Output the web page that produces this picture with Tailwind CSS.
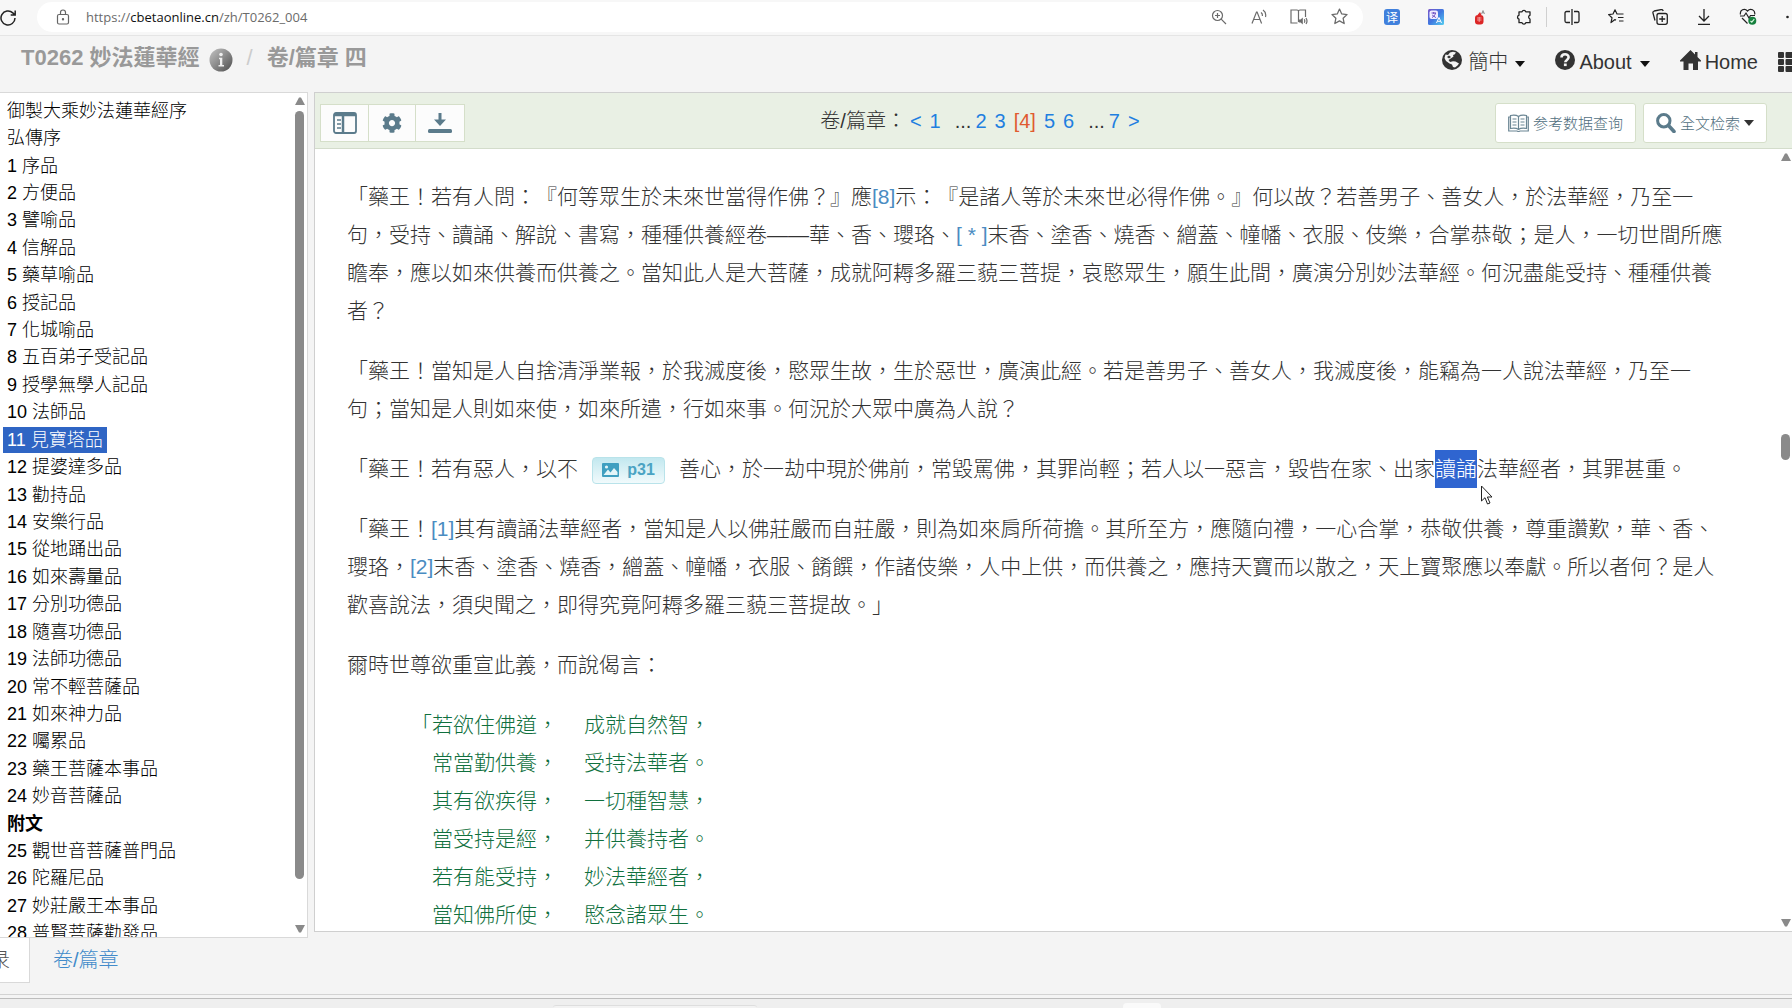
<!DOCTYPE html>
<html lang="zh-Hant">
<head>
<meta charset="utf-8">
<title>T0262 妙法蓮華經</title>
<script src="https://cdn.jsdelivr.net/npm/@tailwindcss/browser@4"></script>
</head>
<body class="flex h-screen flex-col overflow-hidden bg-[#f4f4f4] font-['Liberation_Sans','Noto_Sans_CJK_TC',sans-serif] text-[#333] [text-spacing-trim:space-all]">

<!-- Browser toolbar -->
<div class="flex h-9 shrink-0 items-center overflow-hidden border-b border-[#e5e5e5] bg-[#f7f7f7]">
  <button aria-label="重新整理" class="mr-5 -ml-px h-[18px] w-[18px] shrink-0 text-[#222]">
    <svg viewBox="0 0 18 18" class="h-full w-full" fill="none" stroke="currentColor" stroke-width="1.5"><path d="M16 9a7 7 0 1 1-2.200-5.100L16 6M16.200 1.500V6h-4.500"/></svg>
  </button>
  <div class="mb-[2px] flex h-[30px] min-w-0 flex-1 items-center rounded-full bg-white pr-1 pl-[19px]">
    <svg viewBox="0 0 14 16" class="mr-4 h-4 w-[14px] shrink-0" fill="none" stroke="#666" stroke-width="1.200"><rect x="1.500" y="5.500" width="11" height="9.500" rx="1.500"/><path d="M4.500 5.500V3.500a2.500 2.500 0 0 1 5 0v2"/><circle cx="7" cy="10.200" r=".6" fill="#666"/></svg>
    <div class="min-w-0 flex-1 font-['Open_Sans',sans-serif] text-[13px] leading-5 text-[#6b6b6b]">https://<span class="text-[#111]">cbetaonline.cn</span>/zh/T0262_004</div>
    <div class="flex items-center text-[#6b6b6b]">
      <button aria-label="縮放" class="flex w-10 justify-center"><svg viewBox="0 0 16 16" class="h-4 w-4" fill="none" stroke="currentColor" stroke-width="1.200"><circle cx="6.500" cy="6.500" r="5"/><path d="M10.200 10.200l4.800 4.800M4 6.500h5M6.500 4v5"/></svg></button>
      <button aria-label="朗讀" class="flex w-10 justify-center"><svg viewBox="0 0 16 16" class="h-4 w-4" fill="none" stroke="currentColor" stroke-width="1.200"><path d="M1 14.500L5.500 3h.6l4.500 11.500M2.600 10.500h6.400M10 3.500c1.200.8 1.600 2 1.300 3.500M12 1c2.400 1.600 3.200 4 2.500 7"/></svg></button>
      <button aria-label="沉浸式閱讀" class="flex w-10 justify-center"><svg viewBox="0 0 18 16" class="h-4 w-[18px]" fill="none" stroke="currentColor" stroke-width="1.200"><path d="M8.500 2.500V13M8.500 2.500C8.500 1.500 8 1 7 1H1v13h6.500M8.500 2.500C8.500 1.500 9 1 10 1h5.500v7"/><path d="M8.800 10.500h1.800l2.200-2v7l-2.200-2H8.800z" fill="currentColor" stroke="none"/><path d="M14.300 10.300q1 1.700 0 3.400M16 9q2 3 0 6"/></svg></button>
      <button aria-label="加入我的最愛" class="flex w-10 justify-center"><svg viewBox="0 0 16 16" class="h-[17px] w-[17px]" fill="none" stroke="currentColor" stroke-width="1.200" stroke-linejoin="round"><path d="M8 1l2.100 4.600 5 .6-3.700 3.400 1 5L8 12.100 3.600 14.600l1-5L.9 6.200l5-.6z"/></svg></button>
    </div>
  </div>
  <div class="mb-[2px] ml-[7px] flex shrink-0 items-center text-[#222]">
    <button aria-label="翻譯" class="flex w-11 justify-center"><span class="flex h-4 w-4 items-center justify-center rounded-[3px] bg-[#4080dc] font-['Noto_Sans_CJK_SC',sans-serif] text-xs leading-none text-white">译</span></button>
    <button aria-label="翻譯助手" class="flex w-11 justify-center"><svg viewBox="0 0 16 16" class="h-4 w-4"><defs><linearGradient id="tr" x1="0" y1="0" x2="1" y2="1"><stop offset="0" stop-color="#7a55c8"/><stop offset=".5" stop-color="#3f78e0"/><stop offset="1" stop-color="#58d0f0"/></linearGradient></defs><rect width="16" height="16" rx="1.500" fill="url(#tr)"/><rect x="1.500" y="1.500" width="8.500" height="8.500" rx="2" fill="#f1ecff"/><path d="M3.500 4h4.500M5.700 3v2M4 8.500c2-1 3.200-2.500 3.500-4.500M4.200 6l3.600 2.600" stroke="#6a4cc0" fill="none"/><path d="M8.500 14L11 8.500 13.500 14M9.500 12.300h3" stroke="#fff" fill="none"/></svg></button>
    <button aria-label="劃詞" class="flex w-11 justify-center"><svg viewBox="0 0 12 16" class="h-4 w-3"><rect x="1" y="6" width="8.500" height="9.500" rx="3" fill="#dc2626"/><path d="M3.500 6l2.500-3 1.500 3z" fill="#dc2626"/><path d="M3 9h4.500M5.200 8v5M3 11h4.500" stroke="#f6b5b5" stroke-width=".8"/><path d="M7.500 5L9 1.500 10.500 5M8 3.800h2" stroke="#777" fill="none" stroke-width=".7"/></svg></button>
    <button aria-label="擴充功能" class="flex w-11 justify-center"><svg viewBox="0 0 16 16" class="h-4 w-4" fill="none" stroke="currentColor" stroke-width="1.300" stroke-linejoin="round"><path d="M6 2.800a2 2 0 0 1 3.800 0H14v3.400a2 2 0 0 0 0 3.800v3.700H9.800a2 2 0 0 1-3.800 0H3V10.200a2.100 2.100 0 0 1 0-4V2.800z"/></svg></button>
    <span class="mr-[3px] h-5 w-px bg-[#d0d0d0]"></span>
    <button aria-label="分割畫面" class="flex w-11 justify-center"><svg viewBox="0 0 16 16" class="h-4 w-4" fill="none" stroke="currentColor" stroke-width="1.300"><path d="M6 2.500H2.500a1.500 1.500 0 0 0-1.500 1.500v8a1.500 1.500 0 0 0 1.500 1.500H6M10 2.500h3.500A1.500 1.500 0 0 1 15 4v8a1.500 1.500 0 0 1-1.500 1.500H10M8 0v16"/></svg></button>
    <button aria-label="我的最愛" class="flex w-11 justify-center"><svg viewBox="0 0 16 16" class="h-4 w-4" fill="none" stroke="currentColor" stroke-width="1.200" stroke-linejoin="round"><path d="M8 11.200l-1-.6-4 3 1-4.800L.6 5.600l4.400-.6L7 .8l2 4.200H15.500M10 8.500h5.500M11 12h4.500"/></svg></button>
    <button aria-label="集錦" class="flex w-11 justify-center"><svg viewBox="0 0 16 16" class="h-4 w-4" fill="none" stroke="currentColor" stroke-width="1.300"><rect x="5" y="4.500" width="10.300" height="10.800" rx="2"/><path d="M10.200 7v6M7.200 10h6M3 11.500L1 4.200a1.800 1.800 0 0 1 1.200-2.200L9 .6a1.800 1.800 0 0 1 2.200 1.400"/></svg></button>
    <button aria-label="下載" class="flex w-11 justify-center"><svg viewBox="0 0 16 16" class="h-4 w-4" fill="none" stroke="currentColor" stroke-width="1.300"><path d="M8 0v11.500M3 7l5 5 5-5M2 15.300h12"/></svg></button>
    <button aria-label="瀏覽器健康" class="flex w-11 justify-center"><svg viewBox="0 0 18 17" class="h-[17px] w-[18px]" fill="none" stroke="currentColor" stroke-width="1.200"><path d="M1.500 6.500C.5 2 5.500-.5 8.500 3c3-3.500 8-1 7.200 3.500M1 8h4l2-3 3 5 1.500-2.500H16M3 10l5.500 5.500"/><circle cx="13.300" cy="12.700" r="4" fill="#15803d" stroke="none"/><path d="M11.500 13l1.300 1.200 2.500-3" stroke="#d6f5dd"/></svg></button>
    <button aria-label="更多" class="flex w-[22px] justify-end overflow-hidden"><svg viewBox="0 0 6 4" class="h-1 w-[6px]" fill="currentColor"><circle cx="1.500" cy="2" r="1.300"/></svg></button>
  </div>
</div>

<!-- Site header -->
<header class="flex h-14 shrink-0 items-center justify-between overflow-hidden pl-[21px]">
  <div class="flex items-center pb-3 text-[22px] leading-7 font-bold text-[#999]">
    <h1>T0262 妙法蓮華經</h1>
    <a href="#info" aria-label="資訊" class="mt-1 ml-[9px] block h-6 w-6">
      <svg viewBox="0 0 24 24" class="h-6 w-6"><defs><linearGradient id="ball" x1="0" y1="0" x2="1" y2="1"><stop offset="0" stop-color="#c4c4c4"/><stop offset=".5" stop-color="#8a8a8a"/><stop offset="1" stop-color="#4c4c4c"/></linearGradient></defs><circle cx="12" cy="12" r="11.500" fill="url(#ball)"/><circle cx="12" cy="6.500" r="1.800" fill="#eee"/><path d="M10 9.800h3.300V17H15v1.500H9.500V17H11v-5.700h-1z" fill="#eee"/></svg>
    </a>
    <span class="mx-[14px] font-normal text-[#ccc]">/</span>
    <h2>卷/篇章 四</h2>
  </div>
  <nav class="flex items-center pb-1 text-xl leading-7 font-light text-[#333]">
    <a href="#lang" class="flex items-center">
      <svg viewBox="0 0 20 20" class="mb-1 mr-[6px] h-5 w-5"><circle cx="10" cy="10" r="10" fill="#333"/><path d="M8 2.500l3-.8 3 .8-1.500 2-1.500.5.5 1.500-2 1.500L8 9l-1.500 1L8 12l3-.8 2.500.3 3.500 2-1.500 2-2.500 2-2-.5-1-2.500-2.500-1L4 11 2.500 8 3.500 4.500l2.500.5z" fill="#f4f4f4"/><path d="M5 7l2-1.500L9 7 7 8.500z" fill="#333"/></svg>
      簡中
      <svg viewBox="0 0 10 6" class="mt-1 ml-[7px] h-[6px] w-[10px]" fill="#111"><path d="M0 0h10L5 6z"/></svg>
    </a>
    <a href="#about" class="ml-[30px] flex items-center">
      <svg viewBox="0 0 20 20" class="mb-1 mr-1 h-5 w-5"><circle cx="10" cy="10" r="10" fill="#333"/><path d="M6.500 7.500C6.500 3.300 13.600 3.300 13.600 7.300c0 2.500-3.300 2.700-3.300 5" fill="none" stroke="#f4f4f4" stroke-width="2.600"/><rect x="8.900" y="13.500" width="2.800" height="2.600" fill="#f4f4f4"/></svg>
      About
      <svg viewBox="0 0 10 6" class="mt-1 ml-2 h-[6px] w-[10px]" fill="#111"><path d="M0 0h10L5 6z"/></svg>
    </a>
    <a href="#home" class="ml-[30px] flex items-center">
      <svg viewBox="0 0 21 20" class="mb-1 mr-1 h-5 w-[21px]" fill="#333"><path d="M10.500 0L15 4.500V2h2.500v5L21 10.500v1h-3V20h-5v-6.500H8.500V20h-5v-8.500H0v-1z"/></svg>
      Home
    </a>
    <button aria-label="應用程式" class="ml-5 w-[14px] overflow-hidden">
      <svg viewBox="0 0 14 20" class="h-5 w-[14px]" fill="#333"><rect width="6" height="6" rx="1"/><rect x="7.500" width="8" height="6" rx="1"/><rect y="7" width="6" height="6" rx="1"/><rect x="7.500" y="7" width="8" height="6" rx="1"/><rect y="14" width="6" height="6" rx="1"/><rect x="7.500" y="14" width="8" height="6" rx="1"/></svg>
    </button>
  </nav>
</header>

<main class="flex min-h-0 flex-1">
  <!-- Table of contents -->
  <aside class="flex w-[308px] shrink-0 flex-col">
    <div class="flex min-h-0 flex-1 overflow-hidden border-y border-r border-[#d9d9d9] bg-white">
      <ul id="toc" class="grid h-[854px] min-w-0 flex-1 auto-rows-fr items-center pt-1 pl-[3px] text-lg leading-[26px] font-light text-black">
        <li><a href="#" class="inline-block px-1">御製大乘妙法蓮華經序</a></li>
        <li><a href="#" class="inline-block px-1">弘傳序</a></li>
        <li><a href="#" class="inline-block px-1">1 序品</a></li>
        <li><a href="#" class="inline-block px-1">2 方便品</a></li>
        <li><a href="#" class="inline-block px-1">3 譬喻品</a></li>
        <li><a href="#" class="inline-block px-1">4 信解品</a></li>
        <li><a href="#" class="inline-block px-1">5 藥草喻品</a></li>
        <li><a href="#" class="inline-block px-1">6 授記品</a></li>
        <li><a href="#" class="inline-block px-1">7 化城喻品</a></li>
        <li><a href="#" class="inline-block px-1">8 五百弟子受記品</a></li>
        <li><a href="#" class="inline-block px-1">9 授學無學人記品</a></li>
        <li><a href="#" class="inline-block px-1">10 法師品</a></li>
        <li><a href="#" aria-current="true" class="inline-block bg-[#2f65c4] px-1 text-white">11 見寶塔品</a></li>
        <li><a href="#" class="inline-block px-1">12 提婆達多品</a></li>
        <li><a href="#" class="inline-block px-1">13 勸持品</a></li>
        <li><a href="#" class="inline-block px-1">14 安樂行品</a></li>
        <li><a href="#" class="inline-block px-1">15 從地踊出品</a></li>
        <li><a href="#" class="inline-block px-1">16 如來壽量品</a></li>
        <li><a href="#" class="inline-block px-1">17 分別功德品</a></li>
        <li><a href="#" class="inline-block px-1">18 隨喜功德品</a></li>
        <li><a href="#" class="inline-block px-1">19 法師功德品</a></li>
        <li><a href="#" class="inline-block px-1">20 常不輕菩薩品</a></li>
        <li><a href="#" class="inline-block px-1">21 如來神力品</a></li>
        <li><a href="#" class="inline-block px-1">22 囑累品</a></li>
        <li><a href="#" class="inline-block px-1">23 藥王菩薩本事品</a></li>
        <li><a href="#" class="inline-block px-1">24 妙音菩薩品</a></li>
        <li class="px-1 font-bold">附文</li>
        <li><a href="#" class="inline-block px-1">25 觀世音菩薩普門品</a></li>
        <li><a href="#" class="inline-block px-1">26 陀羅尼品</a></li>
        <li><a href="#" class="inline-block px-1">27 妙莊嚴王本事品</a></li>
        <li><a href="#" class="inline-block px-1">28 普賢菩薩勸發品</a></li>
      </ul>
      <div class="mr-[2px] flex w-[11px] flex-col items-center py-1">
        <svg viewBox="0 0 10 8" class="h-2 w-[10px] shrink-0" fill="#8a8a8a"><path d="M4 .5h2L10 8H0z"/></svg>
        <div class="min-h-0 w-[9px] flex-1 py-[6px]"><div class="h-[95%] rounded-full bg-[#8a8a8a]"></div></div>
        <svg viewBox="0 0 10 8" class="h-2 w-[10px] shrink-0" fill="#8a8a8a"><path d="M4 7.500h2L10 0H0z"/></svg>
      </div>
    </div>
    <div class="flex h-14 shrink-0 items-start text-xl leading-[44px] font-light">
      <a href="#toc" class="flex h-[45px] w-[30px] justify-end overflow-hidden border-r border-b border-[#d9d9d9] bg-white pr-[19px] whitespace-nowrap text-[#555]">目录</a>
      <a href="#juan" class="ml-[23px] text-[#428bca]">卷/篇章</a>
    </div>
  </aside>

  <!-- Reading pane -->
  <section class="mb-[62px] ml-[6px] flex min-w-0 flex-1 flex-col overflow-hidden border-y border-l border-[#cfcfcf] bg-white">
    <div class="flex h-14 shrink-0 items-center justify-between border-b border-[#d3dccb] bg-[#e9f0e4] pt-1 pr-[25px] pl-[5px]">
      <div class="flex divide-x divide-[#d5dfc9] border border-[#d5dfc9] bg-[#fcfcfc] text-[#5b7b8b]">
        <button aria-label="側欄" class="flex h-9 w-12 items-center justify-center"><svg viewBox="0 0 24 22" class="h-[22px] w-6" fill="none" stroke="currentColor" stroke-width="1.800"><rect x="1" y="1" width="22" height="20" rx="2"/><path d="M1 3h22M10 3v18" stroke-width="2.500"/><path d="M4 8h4M4 12h4M4 16h4" stroke-width="1.500"/></svg></button>
        <button aria-label="設定" class="flex h-9 w-[47px] items-center justify-center"><svg viewBox="0 0 512 512" class="h-5 w-5" fill="currentColor"><path d="M487.400 315.700l-42.600-24.600c4.300-23.200 4.300-47 0-70.200l42.600-24.600c4.900-2.800 7.100-8.600 5.500-14-11.100-35.600-30-67.800-54.700-94.600-3.800-4.100-10-5.100-14.800-2.300L380.800 110c-17.900-15.400-38.500-27.300-60.800-35.100V25.800c0-5.600-3.900-10.500-9.400-11.700-36.700-8.200-74.300-7.800-109.200 0-5.500 1.200-9.400 6.100-9.400 11.700V75c-22.200 7.900-42.800 19.800-60.800 35.100L88.700 85.500c-4.900-2.800-11-1.900-14.800 2.300-24.700 26.700-43.600 58.900-54.700 94.600-1.700 5.400.6 11.200 5.500 14L67.300 221c-4.300 23.200-4.300 47 0 70.200l-42.600 24.600c-4.900 2.800-7.100 8.600-5.500 14 11.100 35.600 30 67.800 54.700 94.600 3.800 4.100 10 5.100 14.800 2.300l42.600-24.600c17.900 15.400 38.500 27.300 60.800 35.100v49.200c0 5.600 3.900 10.500 9.400 11.700 36.700 8.200 74.300 7.800 109.200 0 5.500-1.200 9.400-6.100 9.400-11.700v-49.200c22.200-7.900 42.800-19.800 60.800-35.100l42.600 24.600c4.900 2.800 11 1.900 14.800-2.300 24.700-26.700 43.600-58.900 54.700-94.600 1.500-5.500-.7-11.300-5.600-14.100zM256 336c-44.100 0-80-35.900-80-80s35.900-80 80-80 80 35.900 80 80-35.900 80-80 80z"/></svg></button>
        <button aria-label="下載" class="flex h-9 w-12 items-center justify-center"><svg viewBox="0 0 24 20" class="h-5 w-6" fill="currentColor"><path d="M10.500 0h3v6.500H18L12 13 6 6.500h4.500z"/><rect y="16" width="24" height="4" rx="1.500"/></svg></button>
      </div>
      <nav class="flex pb-1 text-xl leading-7 text-[#1f7fe0]">
        <span class="mr-1 font-light text-[#333]">卷/篇章：</span>
        <a href="#">&lt;</a><a href="#" class="ml-2">1</a>
        <span class="ml-[14px] text-[#333]">...</span><a href="#" class="ml-1">2</a><a href="#" class="ml-2">3</a><a href="#" class="ml-2 text-[#e05a30]">[4]</a><a href="#" class="ml-2">5</a><a href="#" class="ml-2">6</a>
        <span class="ml-[14px] text-[#333]">...</span><a href="#" class="ml-1">7</a><a href="#" class="ml-2">&gt;</a>
      </nav>
      <div class="flex gap-[7px] font-['Noto_Sans_CJK_SC',sans-serif] text-[15px] leading-6 font-light text-[#4f6e7d]">
        <button class="flex h-10 items-center rounded-[3px] border border-[#d5dfc9] bg-white px-3 whitespace-nowrap">
          <svg viewBox="0 0 21 18" class="mr-[4px] h-[18px] w-[21px]" fill="none" stroke="#6b8694" stroke-width="1.200"><path d="M10.500 2.500C8.500 1 5 1 2.500 1.500v13c2.500-.5 6-.5 8 1 2-1.500 5.500-1.500 8-1v-13c-2.500-.5-6-.5-8 1v13M2.500 3H.7v14h8.300l1.500.7 1.500-.7h8.300V3h-1.800M4.500 5h4M4.500 8h4M4.500 11h4M12.500 5h4M12.500 8h4M12.500 11h4"/></svg>
          参考数据查询
        </button>
        <button class="flex h-10 items-center rounded-[3px] border border-[#d5dfc9] bg-white px-3 whitespace-nowrap">
          <svg viewBox="0 0 20 20" class="mr-[4px] h-5 w-5" fill="none" stroke="#5b7b8b"><circle cx="7.800" cy="7.800" r="6.200" stroke-width="3"/><path d="M12.500 12.500l5.500 6" stroke-width="3.600" stroke-linecap="round"/></svg>
          全文检索
          <svg viewBox="0 0 10 6" class="ml-1 h-[6px] w-[10px]" fill="#333"><path d="M0 0h10L5 6z"/></svg>
        </button>
      </div>
    </div>

    <div class="flex min-h-0 flex-1">
      <article class="min-w-0 flex-1 overflow-hidden pt-[29px] pr-10 pl-8 text-[21px] leading-[38px] font-light">
        <p class="mb-[22px]">「藥王！若有人問：『何等眾生於未來世當得作佛？』應<a href="#" class="text-[#4a8cc2]">[8]</a>示：『是諸人等於未來世必得作佛。』何以故？若善男子、善女人，於法華經，乃至一<br>句，受持、讀誦、解說、書寫，種種供養經卷——華、香、瓔珞、<a href="#" class="text-[#4a8cc2]">[ * ]</a>末香、塗香、燒香、繒蓋、幢幡、衣服、伎樂，合掌恭敬；是人，一切世間所應<br>瞻奉，應以如來供養而供養之。當知此人是大菩薩，成就阿耨多羅三藐三菩提，哀愍眾生，願生此間，廣演分別妙法華經。何況盡能受持、種種供養<br>者？</p>
        <p class="mb-[22px]">「藥王！當知是人自捨清淨業報，於我滅度後，愍眾生故，生於惡世，廣演此經。若是善男子、善女人，我滅度後，能竊為一人說法華經，乃至一<br>句；當知是人則如來使，如來所遣，行如來事。何況於大眾中廣為人說？</p>
        <p class="mb-[22px]">「藥王！若有惡人，以不<button class="mx-[14px] inline-flex h-[27px] w-[73px] items-center justify-center gap-2 rounded border border-[#b9e3ea] bg-linear-to-b from-[#c2e8ef] to-[#f1fafc] align-middle text-base leading-6 font-bold text-[#4ba3c3]"><svg viewBox="0 0 17 14" class="h-[14px] w-[17px]"><rect width="17" height="14" rx="1" fill="#3f9fc0"/><path d="M1.500 12L6 6.500 8.500 9.500 12 5l3.500 4v3z" fill="#e3f5f8"/><circle cx="4.500" cy="4" r="1.600" fill="#e3f5f8"/></svg>p31</button>善心，於一劫中現於佛前，常毀罵佛，其罪尚輕；若人以一惡言，毀呰在家、出家<span class="relative inline-block bg-[#2f65d0] align-top text-white">讀誦<svg viewBox="0 0 12 20" class="absolute top-[35px] left-[46px] h-5 w-3" fill="#fff" stroke="#222"><path d="M.5 1v15l3.500-3.300L6.500 19l2.500-1-2.600-6H11z"/></svg></span>法華經者，其罪甚重。</p>
        <p class="mb-[22px]">「藥王！<a href="#" class="text-[#4a8cc2]">[1]</a>其有讀誦法華經者，當知是人以佛莊嚴而自莊嚴，則為如來肩所荷擔。其所至方，應隨向禮，一心合掌，恭敬供養，尊重讚歎，華、香、<br>瓔珞，<a href="#" class="text-[#4a8cc2]">[2]</a>末香、塗香、燒香，繒蓋、幢幡，衣服、餚饌，作諸伎樂，人中上供，而供養之，應持天寶而以散之，天上寶聚應以奉獻。所以者何？是人<br>歡喜說法，須臾聞之，即得究竟阿耨多羅三藐三菩提故。」</p>
        <p class="mb-[22px]">爾時世尊欲重宣此義，而說偈言：</p>
        <div class="grid grid-cols-[147px_max-content] gap-x-[26px] pl-16 text-[#10703e]">
          <span>「若欲住佛道，</span><span>成就自然智，</span>
          <span class="pl-[21px]">常當勤供養，</span><span>受持法華者。</span>
          <span class="pl-[21px]">其有欲疾得，</span><span>一切種智慧，</span>
          <span class="pl-[21px]">當受持是經，</span><span>并供養持者。</span>
          <span class="pl-[21px]">若有能受持，</span><span>妙法華經者，</span>
          <span class="pl-[21px]">當知佛所使，</span><span>愍念諸眾生。</span>
        </div>
      </article>
      <div class="flex w-[13px] shrink-0 flex-col items-center py-1">
        <svg viewBox="0 0 10 8" class="h-2 w-[10px] shrink-0" fill="#8a8a8a"><path d="M4 .5h2L10 8H0z"/></svg>
        <div class="flex min-h-0 w-[9px] flex-1 flex-col"><div class="h-[36%]"></div><div class="h-[26px] rounded-full bg-[#8a8a8a]"></div></div>
        <svg viewBox="0 0 10 8" class="h-2 w-[10px] shrink-0" fill="#8a8a8a"><path d="M4 7.500h2L10 0H0z"/></svg>
      </div>
    </div>
  </section>
</main>

<!-- Desktop taskbar edge -->
<footer class="h-[14px] shrink-0 border-t border-[#d3d3d3] pt-[3px]">
  <div class="flex h-[10px] items-end overflow-hidden border-t border-[#bdbdbd] bg-[#efefef]">
    <div class="ml-[553px] h-[3px] w-[204px] rounded-t border-t border-[#dedede] bg-[#f3f3f3]"></div>
    <div class="ml-[366px] h-[5px] w-[38px] rounded-t bg-[#fafafa]"></div>
  </div>
</footer>
</body>
</html>
